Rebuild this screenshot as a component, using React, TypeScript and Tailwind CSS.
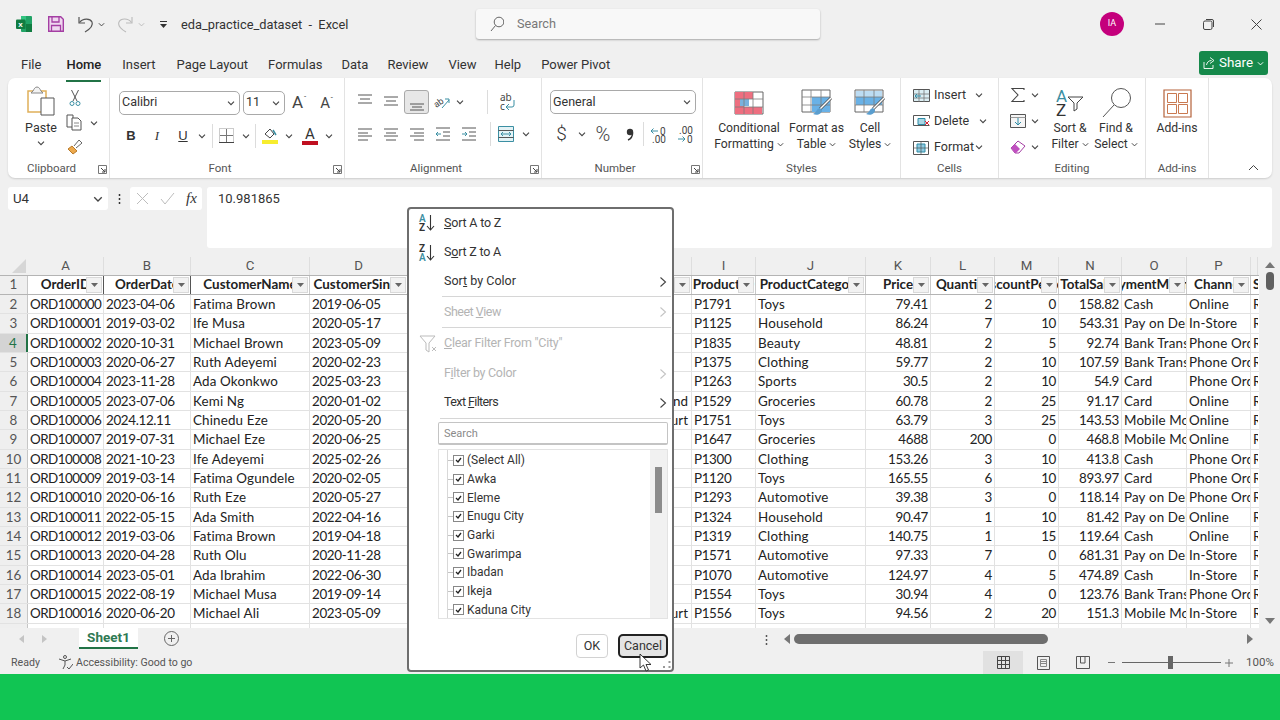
import React from "react";

const UI = "font-['Roboto','Noto_Sans',sans-serif]";
const CELL = "font-['Lato','Noto_Sans',sans-serif]";

const Chev = ({ c = "#444", w = 8 }: { c?: string; w?: number }) => (
  <svg width={w} height={w} viewBox="0 0 8 8" fill="none" className="flex-none"><path d="M1 2.6 4 5.6 7 2.6" stroke={c} strokeWidth="1.1" /></svg>
);
const Ic = ({ w = 18, h = 18, children, vb }: { w?: number; h?: number; vb?: string; children: React.ReactNode }) => (
  <svg width={w} height={h} viewBox={vb ?? `0 0 ${w} ${h}`} fill="none" className="flex-none">{children}</svg>
);
const Launcher = () => (
  <div className="absolute right-[2px] bottom-[4px]">
    <Ic w={9} h={9}><path d="M.5 8.5V.5h8v8z" stroke="#777" /><path d="M3 3l4 4M7 4v3H4" stroke="#444" /></Ic>
  </div>
);
const Group = ({ w, label, launcher, children, last }: { w: number; label: string; launcher?: boolean; children: React.ReactNode; last?: boolean }) => (
  <div style={{ width: w }} className={`relative flex-none flex flex-col h-full ${last ? "" : "border-r border-[#e3e3e3]"}`}>
    <div className="flex-1 min-h-0">{children}</div>
    <div className={`h-[20px] text-center text-[11.5px] leading-[20px] text-[#555] ${launcher ? "pr-[14px]" : ""}`}>{label}</div>
    {launcher && <Launcher />}
  </div>
);
const Lines = ({ ys, xs }: { ys: number[]; xs: [number, number][] }) => (
  <Ic w={16} h={16}>{ys.map((y, i) => <path key={i} d={`M${xs[i][0]} ${y}H${xs[i][1]}`} stroke="#555" />)}</Ic>
);
const Slot = ({ w, children, cls = "" }: { w: number; children?: React.ReactNode; cls?: string }) => (
  <div style={{ width: w }} className={`flex-none flex items-center justify-center ${cls}`}>{children}</div>
);
const Divider = () => <div className="w-px h-[24px] bg-[#dcdcdc] flex-none" />;
const Select = ({ w, text, gap }: { w: number; text: string; gap?: string }) => (
  <div style={{ width: w }} className={`h-[24px] flex-none flex items-center justify-between pl-[2px] pr-[4px] bg-white border border-[#a9a9a9] rounded-[5px] text-[12.5px] text-[#333] ${gap ?? ""}`}>
    <span>{text}</span><Chev />
  </div>
);
const BigBtn = ({ icon, a, b, w }: { icon: React.ReactNode; a: string; b?: string; w: number }) => (
  <div style={{ width: w }} className="flex-none flex flex-col items-center text-[12.2px] leading-[16px] text-[#333]">
    <div className="h-[30px] flex items-center">{icon}</div>
    <div className="mt-[2px] whitespace-nowrap">{a}</div>
    {b && <div className="flex items-center gap-[3px] whitespace-nowrap">{b}<Chev w={7} /></div>}
  </div>
);

const CondIcon = () => (
  <Ic w={30} h={24}>
    <path d="M1 1h28v22H1z" fill="#fff" stroke="#666" />
    <path d="M1 1h18v7h-9v8h18v7H1z" fill="#ee6f80" />
    <path d="M6 8h9v7H6z" fill="#79b2dd" />
    <path d="M10 1v22M19 1v22M1 8h28M1 16h28" stroke="#7c7c7c" strokeWidth=".8" />
  </Ic>
);
const TableIcon = ({ s = false }: { s?: boolean }) => (
  <Ic w={32} h={28}>
    <path d="M1 1h28v22H1z" fill="#fff" stroke="#666" />
    {s ? <path d="M2 2h26v6H2z" fill="#bcdcf3" /> : null}
    <path d={s ? "M2 8h26v8H2z" : "M11 8h18v15H11z"} fill="#69b1e6" />
    <path d="M1 8h28M1 16h28M10 1v22M20 1v22" stroke="#7c7c7c" strokeWidth=".8" />
    <path d="M30 9 19 20" stroke="#555" strokeWidth="3" /><path d="M30 9 19 20" stroke="#fff" strokeWidth="1.4" />
    <path d="M19 19c-3 0-3 4-7 6 4 2 9 0 9-4z" fill="#5a9ecf" />
  </Ic>
);

const headers: [string, number, string][] = [
  ["OrderID", 76, "A"], ["OrderDate", 87, "B"], ["CustomerName", 119, "C"], ["CustomerSince", 98, "D"],
  ["", 71, "E"], ["", 71, "F"], ["", 71, "G"], ["", 71, "H"],
  ["ProductID", 64, "I"], ["ProductCategory", 110, "J"], ["Price", 65, "K"], ["Quantity", 64, "L"],
  ["DiscountPercent", 64, "M"], ["TotalSales", 63, "N"], ["PaymentMethod", 65, "O"], ["Channel", 64, "P"], ["SalesRep", 7, ""],
];
const rows: string[][] = [
  ["ORD100000", "2023-04-06", "Fatima Brown", "2019-06-05", "", "P1791", "Toys", "79.41", "2", "0", "158.82", "Cash", "Online"],
  ["ORD100001", "2019-03-02", "Ife Musa", "2020-05-17", "", "P1125", "Household", "86.24", "7", "10", "543.31", "Pay on Delivery", "In-Store"],
  ["ORD100002", "2020-10-31", "Michael Brown", "2023-05-09", "", "P1835", "Beauty", "48.81", "2", "5", "92.74", "Bank Transfer", "Phone Order"],
  ["ORD100003", "2020-06-27", "Ruth Adeyemi", "2020-02-23", "", "P1375", "Clothing", "59.77", "2", "10", "107.59", "Bank Transfer", "Phone Order"],
  ["ORD100004", "2023-11-28", "Ada Okonkwo", "2025-03-23", "", "P1263", "Sports", "30.5", "2", "10", "54.9", "Card", "Phone Order"],
  ["ORD100005", "2023-07-06", "Kemi Ng", "2020-01-02", "Victoria Island", "P1529", "Groceries", "60.78", "2", "25", "91.17", "Card", "Online"],
  ["ORD100006", "2024.12.11", "Chinedu Eze", "2020-05-20", "Port Harcourt", "P1751", "Toys", "63.79", "3", "25", "143.53", "Mobile Money", "Online"],
  ["ORD100007", "2019-07-31", "Michael Eze", "2020-06-25", "", "P1647", "Groceries", "4688", "200", "0", "468.8", "Mobile Money", "Online"],
  ["ORD100008", "2021-10-23", "Ife Adeyemi", "2025-02-26", "", "P1300", "Clothing", "153.26", "3", "10", "413.8", "Cash", "Phone Order"],
  ["ORD100009", "2019-03-14", "Fatima Ogundele", "2020-02-05", "", "P1120", "Toys", "165.55", "6", "10", "893.97", "Card", "Phone Order"],
  ["ORD100010", "2020-06-16", "Ruth Eze", "2020-05-27", "", "P1293", "Automotive", "39.38", "3", "0", "118.14", "Pay on Delivery", "Phone Order"],
  ["ORD100011", "2022-05-15", "Ada Smith", "2022-04-16", "", "P1324", "Household", "90.47", "1", "10", "81.42", "Pay on Delivery", "Online"],
  ["ORD100012", "2019-03-06", "Fatima Brown", "2019-04-18", "", "P1319", "Clothing", "140.75", "1", "15", "119.64", "Cash", "Online"],
  ["ORD100013", "2020-04-28", "Ruth Olu", "2020-11-28", "", "P1571", "Automotive", "97.33", "7", "0", "681.31", "Pay on Delivery", "In-Store"],
  ["ORD100014", "2023-05-01", "Ada Ibrahim", "2022-06-30", "", "P1070", "Automotive", "124.97", "4", "5", "474.89", "Cash", "In-Store"],
  ["ORD100015", "2022-08-19", "Michael Musa", "2019-09-14", "", "P1554", "Toys", "30.94", "4", "0", "123.76", "Bank Transfer", "Phone Order"],
  ["ORD100016", "2020-06-20", "Michael Ali", "2023-05-09", "Port Harcourt", "P1556", "Toys", "94.56", "2", "20", "151.3", "Mobile Money", "In-Store"],
  ["ORD100017", "2021-02-11", "Michael Bello", "2021-07-19", "", "P1410", "Household", "", "", "", "", "", ""],
];

const widths = [76, 87, 119, 98];
const widths2 = [64, 110, 65, 64, 64, 63, 65, 64];
const numeric = [false, false, true, true, true, true, false, false];

const tightOf = (t?: string) => {
  if (!t) return "";
  if (t.startsWith("ORD")) return "tracking-[-0.5px]";
  if (/^P?[\d.-]+$/.test(t)) return "tracking-[-0.35px]";
  return "tracking-[0.15px]";
};

const Cell = ({ w, t, right }: { w: number; t?: string; right?: boolean }) => (
  <div style={{ width: w }} className={`flex-none h-full border-r border-[#e2e2e2] overflow-hidden whitespace-nowrap ${right ? "text-right pr-[2px]" : "pl-[2px]"} ${tightOf(t)}`}>{t}</div>
);

const Row = ({ n, r }: { n: number; r: string[] }) => (
  <div className={`flex h-[19.33px] leading-[18px] text-[13.4px] text-[#222] border-b border-[#e2e2e2] ${CELL}`}>
    <div className={`w-[28px] flex-none text-center border-r text-[#555] ${n === 4 ? "bg-[#d4d4d4] border-r-2 border-[#217346] text-[#217346]" : "bg-[#efefef] border-[#c6c6c6]"}`}>{n}</div>
    {widths.map((w, i) => <Cell key={i} w={w} t={r[i]} />)}
    <Cell w={213} />
    <div className="w-[71px] flex-none flex justify-end overflow-hidden pr-[3px] border-r border-[#e2e2e2]"><span className="flex-none whitespace-nowrap">{r[4]}</span></div>
    {widths2.map((w, i) => <Cell key={i} w={w} t={r[5 + i]} right={numeric[i]} />)}
    <div className="flex-none w-[7px] overflow-hidden pl-[2px]">{r[5] && r[7] ? "Retail" : ""}</div>
  </div>
);

const FilterBtn = () => (
  <div className="absolute right-[1px] top-[1px] bottom-[1px] w-[16px] bg-[#f2f2f2] border border-[#d9d9d9] flex items-center justify-center">
    <svg width="7" height="4" viewBox="0 0 7 4"><path d="M0 0h7L3.5 4z" fill="#666" /></svg>
  </div>
);

const SortIcon = ({ top, bot }: { top: string; bot: string }) => (
  <div className="relative w-[22px] h-[20px] flex-none flex items-center">
    <div className={`flex flex-col text-[10px] leading-[9px] font-semibold ${UI}`}>
      <span className={top === "A" ? "text-[#3b8fa3]" : "text-[#333]"}>{top}</span>
      <span className={bot === "A" ? "text-[#3b8fa3]" : "text-[#333]"}>{bot}</span>
    </div>
    <Ic w={9} h={18}><path d="M4.5 1v15M1 12l3.5 4L8 12" stroke="#333" strokeWidth="1.1" /></Ic>
  </div>
);

const MenuRow = ({ icon, children, arrow, dis, h = 29, pb = "", tr = "" }: { icon?: React.ReactNode; children: React.ReactNode; arrow?: boolean; dis?: boolean; h?: number; pb?: string; tr?: string }) => (
  <div style={{ height: h }} className={`flex items-center pl-[9px] pr-[5px] text-[12.5px] ${pb} ${dis ? "text-[#b4b4b4]" : "text-[#333]"}`}>
    <div className="w-[25px] flex-none">{icon}</div>
    <div className={`flex-1 whitespace-nowrap ${tr}`}>{children}</div>
    {arrow && <Ic w={8} h={12}><path d="M1.5 1.5 6.5 6l-5 4.5" stroke={dis ? "#c4c4c4" : "#444"} strokeWidth="1.1" /></Ic>}
  </div>
);
const cities = ["(Select All)", "Awka", "Eleme", "Enugu City", "Garki", "Gwarimpa", "Ibadan", "Ikeja", "Kaduna City"];

const FilterMenu = () => (
  <div className={`absolute left-[407px] top-[207px] w-[267px] h-[465px] bg-white border-2 border-[#6e6e6e] rounded-[4px] ${UI}`}>
    <div className="flex flex-col pl-[1px] pt-[1px]">
      <MenuRow icon={<SortIcon top="A" bot="Z" />} h={28} pb="pb-[2px]" tr="tracking-[-0.2px]"><u>S</u>ort A to Z</MenuRow>
      <MenuRow icon={<SortIcon top="Z" bot="A" />} tr="tracking-[-0.2px]">S<u>o</u>rt Z to A</MenuRow>
      <MenuRow arrow>Sor<u>t</u> by Color</MenuRow>
      <div className="ml-[32px] mr-[1px] h-px bg-[#d6d6d6]" />
      <MenuRow arrow dis h={30} tr="tracking-[-0.5px]">Sheet <u>V</u>iew</MenuRow>
      <div className="ml-[32px] mr-[1px] h-px bg-[#d6d6d6]" />
      <MenuRow dis h={31} tr="tracking-[-0.25px]" icon={<Ic w={18} h={18}><path d="M1 1h15l-6 7v9l-3-2V8z" stroke="#bbb" /><path d="M13 12l4 4M17 12l-4 4" stroke="#bbb" /></Ic>}><u>C</u>lear Filter From "City"</MenuRow>
      <MenuRow arrow dis tr="tracking-[-0.3px]">F<u>i</u>lter by Color</MenuRow>
      <MenuRow arrow tr="tracking-[-0.6px]">Text <u>F</u>ilters</MenuRow>
      <div className="ml-[30px] mr-[1px] h-px bg-[#d6d6d6] mt-[1px]" />
      <div className="ml-[28px] mt-[3px] w-[230px] h-[23px] border border-[#c4c4c4] border-b-2 rounded-[2px] pl-[5px] text-[11px] leading-[21px] text-[#8a8a8a]">Search</div>
      <div className="ml-[28px] mt-[4px] w-[230px] h-[170px] border border-[#e3e3e3] flex overflow-hidden">
        <div className="flex-1 pl-[8px]">
          <div className="pt-[1px] border-l border-[#d8d8d8]">
            {cities.map((c) => (
              <div key={c} className="flex items-center h-[18.7px] text-[12px] text-[#333]">
                <div className="w-[5px] h-px bg-[#c4c4c4]" />
                <div className="w-[11px] h-[11px] border border-[#888] flex items-center justify-center flex-none">
                  <svg width="7" height="6" viewBox="0 0 7 6"><path d="M1 3l2 2 3-4" stroke="#222" strokeWidth="1.3" fill="none" /></svg>
                </div>
                <span className="ml-[3px]">{c}</span>
              </div>
            ))}
          </div>
        </div>
        <div className="w-[17px] bg-[#f1f1f1] pt-[17px] flex justify-center">
          <div className="w-[7px] h-[46px] bg-[#8c8c8c]" />
        </div>
      </div>
      <div className="flex justify-end gap-[10px] mt-[15px] pr-[4px] text-[12.5px] text-[#333]">
        <div className="w-[32px] h-[24px] border border-[#d2d2d2] rounded-[4px] flex items-center justify-center">OK</div>
        <div className="w-[50px] h-[24px] border-2 border-[#222] bg-[#e4e4e4] rounded-[5px] flex items-center justify-center">Cancel</div>
      </div>
    </div>
    <div className="absolute left-[230px] top-[444px]">
      <svg width="13" height="19" viewBox="0 0 13 19"><path d="M1 1v14l3.5-3 2.5 6 2.5-1-2.5-5.5H12z" fill="#fff" stroke="#222" strokeWidth=".9" /></svg>
    </div>
    <div className="absolute right-[1px] bottom-[1px]">
      <svg width="8" height="8" viewBox="0 0 8 8" fill="#999"><rect x="5.5" y="0" width="2" height="2" /><rect x="5.5" y="5" width="2" height="2" /><rect x="0" y="5" width="2" height="2" /></svg>
    </div>
  </div>
);

export default function App() {
  return (
    <div className={`relative w-[1280px] h-[720px] overflow-hidden bg-[#f0f0f0] flex flex-col ${UI}`}>
      {/* title bar */}
      <div className="h-[48px] flex-none flex items-center text-[#333] text-[12.5px]">
        <div className="ml-[16px] w-[16px] h-[16px] flex-none">
          <svg width="16" height="16" viewBox="0 0 16 16"><rect x="5" y="0" width="11" height="16" rx="1" fill="#21a366" /><rect x="10" y="8" width="6" height="8" fill="#107c41" /><rect x="5" y="0" width="5" height="5" fill="#33c481" /><rect x="0" y="3.5" width="9.5" height="9.5" rx="1" fill="#107c41" /><text x="2.2" y="11" fontSize="8" fontWeight="700" fill="#fff" fontFamily="Liberation Sans">x</text></svg>
        </div>
        <div className="ml-[16px] flex-none">
          <Ic w={16} h={16}><path d="M.7.7h12l2.6 2.6v12H.7z" fill="#efd7ef" stroke="#a43ea3" strokeWidth="1.4" /><path d="M4 1v5h7V1M3.5 15.3V9.5h9v5.8" stroke="#a43ea3" strokeWidth="1.3" /></Ic>
        </div>
        <div className="ml-[13px] flex-none">
          <Ic w={18} h={18}><path d="M2 2v6h6" stroke="#555" strokeWidth="1.2" /><path d="M2.5 7.5C6 3 13 3 15 7c1.700 4-2 7-7 10" stroke="#555" strokeWidth="1.2" /></Ic>
        </div>
        <div className="ml-[3px]"><Chev w={7} /></div>
        <div className="ml-[12px]">
          <Ic w={17} h={18}><path d="M15 2v6H9" stroke="#bbb" strokeWidth="1.100" /><path d="M14.500 7.500C11 3 4 3 2 7c-1.700 4 2 7 7 10" stroke="#bbb" strokeWidth="1.100" /></Ic>
        </div>
        <div className="ml-[4px]"><Chev w={7} c="#bbb" /></div>
        <div className="ml-[14px]"><Ic w={9} h={9}><path d="M1 1.500h7" stroke="#333" /><path d="M1 4l3.500 4L8 4z" fill="#333" /></Ic></div>
        <div className="ml-[13px] w-[200px] whitespace-pre text-[12.8px] pt-[1px]">eda_practice_dataset  -  Excel</div>
        <div className="ml-[95px] w-[344px] h-[30px] -mt-[1px] flex items-center bg-[#f8f8f8] rounded-[3px] shadow-[0_1px_2px_rgba(0,0,0,0.3)] pl-[14px] text-[12.7px] text-[#777]">
          <Ic w={14} h={16}><circle cx="9" cy="6" r="4.800" stroke="#666" /><path d="M5.500 9.500 1 15" stroke="#666" /></Ic>
          <span className="ml-[13px] pt-[1px]">Search</span>
        </div>
        <div className="ml-[280px] w-[24px] h-[24px] rounded-full bg-[#c4007c] text-white text-[9px] flex items-center justify-center flex-none">IA</div>
        <div className="ml-[31px] flex-none"><Ic w={10} h={2}><path d="M0 1h10" stroke="#444" /></Ic></div>
        <div className="ml-[38px] flex-none"><Ic w={11} h={11}><rect x=".5" y="2" width="8.500" height="8.500" rx="1.500" stroke="#444" /><path d="M3 .5h6a1.500 1.500 0 0 1 1.500 1.500v6" stroke="#444" /></Ic></div>
        <div className="ml-[37px] flex-none"><Ic w={11} h={11}><path d="M.5.500l10 10M10.500.500l-10 10" stroke="#444" /></Ic></div>
      </div>
      {/* tabs */}
      <div className="h-[30px] flex-none flex items-start text-[13px] text-[#333] pl-[21px] pr-[12px] gap-[20px] relative">
        <span className="leading-[33px] mr-[5px]">File</span>
        <span className="leading-[33px] mr-[1px] font-medium relative text-[#222]">Home<span className="absolute left-0 right-0 bottom-[-1px] h-[2px] bg-[#217346]" /></span>
        <span className="leading-[33px] mr-[1px]">Insert</span>
        <span className="leading-[33px]">Page Layout</span>
        <span className="leading-[33px] -mr-[1px]">Formulas</span>
        <span className="leading-[33px] -mr-[1px]">Data</span>
        <span className="leading-[33px]">Review</span>
        <span className="leading-[33px] -mr-[2px]">View</span>
        <span className="leading-[33px]">Help</span>
        <span className="leading-[33px]">Power Pivot</span>
        <div className="ml-auto mt-[3px] w-[69px] h-[24px] rounded-[3px] bg-[#16894b] text-white flex items-center justify-center gap-[4px]">
          <Ic w={12} h={12}><path d="M1 5v6.500h9V8M3.500 8C4 5 6 3.500 8.500 3.500M7 .5l4 3-4 3" stroke="#fff" strokeWidth=".9" /></Ic>
          <span className="text-[13.4px] pt-[1px]">Share</span><Chev c="#fff" w={7} />
        </div>
      </div>
      {/* ribbon */}
      <div className="mx-[8px] h-[100px] flex-none bg-white rounded-[7px] shadow-[0_1px_2px_rgba(0,0,0,0.15)] flex text-[#333]">
        <Group w={102} label="Clipboard" launcher>
          <div className="flex h-full pt-[8px] pl-[18px]">
            <div className="w-[30px] flex flex-col items-center flex-none">
              <Ic w={30} h={30}><path d="M2 5h18v21H2z" fill="#fff" stroke="#e0b05a" strokeWidth="1.500" /><path d="M7 5c1-2 2-4 4-4s3 2 4 4l2 2H5z" fill="#f3f3f3" stroke="#888" /><path d="M15 12h13v17H15z" fill="#fff" stroke="#555" /></Ic>
              <span className="text-[12.5px] mt-[3px] leading-[18px]">Paste</span>
              <div className="mt-[2px]"><Chev /></div>
            </div>
            <div className="ml-[10px] flex flex-col flex-none">
              <div className="flex h-[26px] items-center pl-[3px]"><Ic w={12} h={18}><path d="M2.500 1 8 12M9.500 1 4 12" stroke="#555" /><circle cx="3" cy="14.500" r="2" stroke="#3b8fa3" /><circle cx="9" cy="14.500" r="2" stroke="#3b8fa3" /></Ic></div>
              <div className="flex h-[26px] items-center"><Ic w={17} h={17}><path d="M1 1h6v12H1z" stroke="#555" /><path d="M6 4h6l3 3v9H6z" fill="#fff" stroke="#555" /><path d="M8 9h5M8 12h5" stroke="#888" /></Ic><div className="ml-[7px]"><Chev /></div></div>
              <div className="flex h-[24px] items-center"><Ic w={17} h={16}><path d="M6 7l5 5-4 3-5-5z" fill="#eda94c" stroke="#b97a2a" /><path d="M8 7l5-6 3 3-6 5" stroke="#666" /></Ic></div>
            </div>
          </div>
        </Group>
        <Group w={235} label="Font" launcher>
          <div className="pt-[12px] pl-[9px]">
            <div className="flex items-center">
              <Select w={121} text="Calibri" />
              <Select w={42} text="11" gap="ml-[3px]" />
              <Slot w={27} cls="ml-[1px]"><span className="text-[17px] text-[#444]">A<sup className="text-[8px] top-[-6px]">ˆ</sup></span></Slot>
              <Slot w={28}><span className="text-[15px] text-[#444]">A<sup className="text-[8px] top-[-5px]">ˇ</sup></span></Slot>
            </div>
            <div className="flex items-center mt-[10px] h-[20px]">
              <Slot w={6} />
              <Slot w={12}><span className="font-bold text-[13px] font-['Liberation_Sans']">B</span></Slot>
              <Slot w={14} />
              <Slot w={12}><span className="italic text-[13px] font-['Liberation_Serif']">I</span></Slot>
              <Slot w={14} />
              <Slot w={12}><span className="underline text-[13px] font-['Liberation_Sans']">U</span></Slot>
              <Slot w={9} /><Chev />
              <Slot w={6} /><Divider /><Slot w={6} />
              <Ic w={15} h={15}><path d="M.5.500h14v14H.5z" stroke="#999" strokeDasharray="1 1" /><path d="M7.500 1v13M1 7.500h13" stroke="#777" /><path d="M0 14.500h15" stroke="#444" /></Ic>
              <Slot w={8} /><Chev />
              <Slot w={5} /><Divider /><Slot w={6} />
              <Ic w={16} h={17}><path d="M3 7l5-5 4 5-4 4z" stroke="#444" /><path d="M11 3l3 5" stroke="#3b8fa3" strokeWidth="1.500" /><path d="M0 13h16v4H0z" fill="#f7ed2e" /></Ic>
              <Slot w={7} /><Chev />
              <Slot w={9} />
              <div className="relative w-[16px] h-[18px] flex-none flex justify-center"><span className="text-[15px] leading-[14px] text-[#333]">A</span><div className="absolute left-0 right-0 bottom-0 h-[4px] bg-[#c00f20]" /></div>
              <Slot w={7} /><Chev />
            </div>
          </div>
        </Group>
        <Group w={197} label="Alignment" launcher>
          <div className="pt-[12px] pl-[7px]">
            <div className="flex items-center h-[24px]">
              <Slot w={26} cls="-mt-[4px]"><Lines ys={[3, 7, 11]} xs={[[1, 15], [3, 13], [1, 15]]} /></Slot>
              <Slot w={26}><Lines ys={[3, 7, 11]} xs={[[1, 15], [3, 13], [1, 15]]} /></Slot>
              <Slot w={25} cls="h-[24px] bg-[#e7e7e7] border border-[#a9a9a9] rounded-[3px] pt-[5px]"><Lines ys={[7, 10, 13]} xs={[[1, 15], [3, 13], [1, 15]]} /></Slot>
              <Slot w={27}><Ic w={17} h={15}><text x="0" y="10" fontSize="9" fill="#444" transform="rotate(-35 6 8)">ab</text><path d="M8 13 15 5M11 4h4v4" stroke="#3b8fa3" /></Ic></Slot>
              <Chev />
              <Slot w={23} /><Divider /><Slot w={11} />
              <Ic w={18} h={20}><text x="1" y="9" fontSize="10" fill="#444" fontFamily="Noto Sans">ab</text><text x="1" y="18" fontSize="10" fill="#444" fontFamily="Noto Sans">c</text><path d="M15 8v5a2 2 0 0 1-2 2H8M10 12l-3 3 3 3" stroke="#3b8fa3" /></Ic>
            </div>
            <div className="flex items-center h-[20px] mt-[10px]">
              <Slot w={26}><Lines ys={[3, 7, 10, 14]} xs={[[1, 15], [1, 11], [1, 15], [1, 11]]} /></Slot>
              <Slot w={26}><Lines ys={[3, 7, 10, 14]} xs={[[1, 15], [3, 13], [1, 15], [3, 13]]} /></Slot>
              <Slot w={26}><Lines ys={[3, 7, 10, 14]} xs={[[1, 15], [5, 15], [1, 15], [5, 15]]} /></Slot>
              <Slot w={26}><Ic w={16} h={16}><path d="M1 2h14M8 6h7M8 10h7M1 14h14" stroke="#555" /><path d="M6 8H1M3 6 1 8l2 2" stroke="#3b8fa3" /></Ic></Slot>
              <Slot w={26}><Ic w={16} h={16}><path d="M1 2h14M8 6h7M8 10h7M1 14h14" stroke="#555" /><path d="M1 8h5M4 6l2 2-2 2" stroke="#3b8fa3" /></Ic></Slot>
              <Slot w={8} /><Divider /><Slot w={7} />
              <Ic w={16} h={16}><path d="M.5.500h15v15H.5z" fill="#e4f2f5" stroke="#3b8fa3" /><path d="M.5 4.500h15M.5 11.500h15" stroke="#555" /><path d="M3 8h10M5 6 3 8l2 2M11 6l2 2-2 2" stroke="#3b8fa3" /></Ic>
              <Slot w={8} /><Chev />
            </div>
          </div>
        </Group>
        <Group w={161} label="Number" launcher>
          <div className="pt-[12px] pl-[8px]">
            <Select w={146} text="General" />
            <div className="flex items-center mt-[9px] h-[22px]">
              <Slot w={23}><span className="text-[19px] font-light text-[#333]">$</span></Slot>
              <Slot w={5} /><Chev />
              <Slot w={5} />
              <Slot w={24}><span className="text-[20px] font-light text-[#444]">%</span></Slot>
              <Slot w={9} />
              <Slot w={12}><Ic w={8} h={13}><circle cx="4" cy="4" r="3.200" fill="#333" /><path d="M6.600 4.500c0 3.500-2 6.500-4.600 7.500" stroke="#333" strokeWidth="1.500" /></Ic></Slot>
              <Slot w={7} /><Divider />
              <Slot w={6} />
              <Ic w={17} h={17}><path d="M1 5h7M3.500 2.500 1 5l2.500 2.500" stroke="#3b8fa3" /><text x="10" y="8.500" fontSize="10" fill="#444">0</text><text x="2" y="16.500" fontSize="10" fill="#444">.00</text></Ic>
              <Slot w={10} />
              <Ic w={17} h={17}><text x="2" y="8" fontSize="10" fill="#444">.00</text><path d="M1 13h7M5.500 10.500 8 13l-2.500 2.500" stroke="#3b8fa3" /><text x="10" y="16.500" fontSize="10" fill="#444">0</text></Ic>
            </div>
          </div>
        </Group>
        <Group w={198} label="Styles">
          <div className="flex pt-[10px] pl-[9px]">
            <BigBtn w={74} icon={<CondIcon />} a="Conditional" b="Formatting" />
            <BigBtn w={61} icon={<TableIcon />} a="Format as" b="Table" />
            <BigBtn w={46} icon={<TableIcon s />} a="Cell" b="Styles" />
          </div>
        </Group>
        <Group w={98} label="Cells">
          <div className="pt-[4px] pl-[12px] text-[12.5px]">
            <div className="flex items-center h-[26px]"><Ic w={17} h={16}><path d="M.5 2.500h16v12H.5z" fill="#dbeef3" stroke="#555" /><path d="M.5 7h16M.5 11h16M6 3v12M11 3v12" stroke="#777" strokeWidth=".8" /><path d="M8 9H2M4 7 2 9l2 2" stroke="#2e8ca6" /></Ic><span className="ml-[4px] w-[41px]">Insert</span><Chev /></div>
            <div className="flex items-center h-[26px]"><Ic w={17} h={16}><path d="M.5 2.500h16v3M.5 2.500v10h16" stroke="#555" /><path d="M5 5.500h7v6H5z" fill="#aad6e5" stroke="#2e8ca6" /><path d="M12 8l4 4M16 8l-4 4" stroke="#d23" /></Ic><span className="ml-[4px] w-[45px]">Delete</span><Chev /></div>
            <div className="flex items-center h-[26px]"><Ic w={17} h={16}><path d="M.5 2.500h15v13H.5z" stroke="#555" /><path d="M4 5h8v8H4z" fill="#8fcbe2" stroke="#2e8ca6" /><path d="M.5 9h15M8 2v14" stroke="#555" strokeWidth=".7" /></Ic><span className="ml-[4px] w-[41px]">Format</span><Chev /></div>
          </div>
        </Group>
        <Group w={147} label="Editing">
          <div className="flex pt-[4px] pl-[11px]">
            <div className="w-[38px] flex-none">
              <div className="flex items-center h-[26px]"><Ic w={16} h={16}><path d="M14 3V1.500H2L8 8l-6 6.500h12V13" stroke="#444" strokeWidth="1.100" /></Ic><span className="ml-[5px]"><Chev /></span></div>
              <div className="flex items-center h-[26px]"><Ic w={16} h={16}><path d="M.5 1.500h15v13H.5z" fill="#f5f5f5" stroke="#555" /><path d="M.5 4.500h15" stroke="#999" /><path d="M8 5v7M5 9l3 3 3-3" stroke="#2e8ca6" /></Ic><span className="ml-[5px]"><Chev /></span></div>
              <div className="flex items-center h-[26px]"><Ic w={16} h={16}><path d="M1 9l7-7 7 5-6 7H5z" fill="#fff" stroke="#a43ea3" /><path d="M1 9l4-4 5 5-4 4H5z" fill="#c04fc0" /></Ic><span className="ml-[5px]"><Chev /></span></div>
            </div>
            <div className="-ml-[1px] pt-[6px]">
              <BigBtn w={46} icon={<div className="flex items-center"><div className={`flex flex-col text-[17px] leading-[14px] ${UI}`}><span className="text-[#3b8fa3]">A</span><span>Z</span></div><Ic w={17} h={18}><path d="M1 3h15l-6 6v6l-3 2V9z" stroke="#444" /></Ic></div>} a="Sort &" b="Filter" />
            </div>
            <div className="pl-[0px] pt-[6px]">
              <BigBtn w={46} icon={<Ic w={30} h={30}><circle cx="20" cy="10" r="9.500" stroke="#555" /><path d="M13 17 2 29" stroke="#555" /></Ic>} a="Find &" b="Select" />
            </div>
          </div>
        </Group>
        <Group w={63} label="Add-ins">
          <div className="pt-[10px] flex justify-center">
            <BigBtn w={60} icon={<Ic w={29} h={29}><path d="M1 1h27v27H1z" stroke="#b5623a" strokeWidth="1.200" /><path d="M4.500 4.500h9v9h-9zM15.500 4.500h9v9h-9zM4.500 15.500h9v9h-9zM15.500 15.500h9v9h-9z" stroke="#c97950" /></Ic>} a="Add-ins" />
          </div>
        </Group>
        <div className="flex-1 flex items-end justify-end pr-[13px] pb-[7px]">
          <Ic w={11} h={7}><path d="M1 6l4.500-4.500L10 6" stroke="#444" /></Ic>
        </div>
      </div>
      {/* formula bar */}
      <div className="mt-[9px] mx-[8px] h-[61px] flex-none flex items-start text-[#333]">
        <div className="w-[100px] h-[23px] bg-white rounded-[3px] flex items-center justify-between pl-[5px] pr-[5px] text-[13.3px] flex-none"><span>U4</span><Chev w={10} /></div>
        <div className="w-[22px] h-[23px] flex items-center justify-center flex-none"><Ic w={3} h={12}><path d="M1.500 1v2M1.500 5v2M1.500 9v2" stroke="#333" strokeWidth="1.500" /></Ic></div>
        <div className="w-[72px] h-[23px] bg-white rounded-[3px] flex items-center pl-[6px] gap-[11px] flex-none">
          <Ic w={13} h={13}><path d="M1 1l11 11M12 1 1 12" stroke="#bdbdbd" /></Ic>
          <Ic w={15} h={13}><path d="M1 7l4 5L14 1" stroke="#bdbdbd" /></Ic>
          <span className="italic text-[15px] font-['Liberation_Serif'] text-[#333]">fx</span>
        </div>
        <div className="ml-[5px] flex-1 h-[61px] bg-white rounded-[3px] pl-[11px] pt-[1px] text-[13px] leading-[21px]">10.981865</div>
      </div>
      {/* sheet */}
      <div className="mt-[9px] h-[371px] flex-none flex overflow-hidden">
        <div className="w-[1259px] flex-none overflow-hidden">
          <div className="flex h-[18px] text-[13.3px] leading-[18px] text-[#555] bg-[#f0f0f0]">
            <div className="w-[28px] flex-none flex justify-end items-end pr-[2px] pb-[2px]">
              <svg width="14" height="14" viewBox="0 0 14 14"><path d="M14 0v14H0z" fill="#d6d6d6" /></svg>
            </div>
            {headers.map(([, w, l], i) => (
              <div key={i} style={{ width: w }} className="flex-none text-center border-r border-[#dedede]">{l}</div>
            ))}
          </div>
          <div className={`flex h-[20px] leading-[17px] text-[13.4px] bg-white border-y border-[#b4b4b4] font-bold text-[#222] ${CELL}`}>
            <div className="w-[28px] flex-none text-center font-normal text-[#555] bg-[#efefef] border-r border-[#c6c6c6]">1</div>
            {headers.map(([t, w], i) => (
              <div key={i} style={{ width: w }} className={`relative flex-none flex overflow-hidden ${w === 7 ? "justify-start pl-[2px]" : "justify-center border-r"} ${i < 2 ? "border-[#555]" : "border-[#c9c9c9]"}`}>
                <span className="flex-none whitespace-nowrap">{t}</span>
                {w > 8 && (i < 4 || i >= 7) && <FilterBtn />}
              </div>
            ))}
          </div>
          <div className="bg-white">
            {rows.map((r, i) => <Row key={i} n={i + 2} r={r} />)}
          </div>
        </div>
        <div className="w-[21px] flex-none flex flex-col items-center justify-between pt-[5px] pb-[4px]">
          <div className="flex flex-col items-center gap-[4px]">
            <svg width="10" height="6" viewBox="0 0 10 6"><path d="M5 0l5 6H0z" fill="#777" /></svg>
            <div className="w-[8px] h-[18px] rounded-[4px] bg-[#606060]" />
          </div>
          <svg width="10" height="6" viewBox="0 0 10 6"><path d="M0 0h10L5 6z" fill="#777" /></svg>
        </div>
      </div>
      {/* sheet tabs */}
      <div className="h-[23px] flex-none flex items-start bg-[#f0f0f0] text-[#555]">
        <div className="ml-[19px] mt-[7px]"><svg width="5" height="8" viewBox="0 0 5 8"><path d="M5 0v8L0 4z" fill="#c4c4c4" /></svg></div>
        <div className="ml-[18px] mt-[7px]"><svg width="5" height="8" viewBox="0 0 5 8"><path d="M0 0v8l5-4z" fill="#c4c4c4" /></svg></div>
        <div className="ml-[32px] w-[59px] h-[21px] bg-white border-b-2 border-[#217346] text-center text-[13.5px] leading-[19px] font-bold text-[#2f7a54] flex-none">Sheet1</div>
        <div className="ml-[26px] mt-[3px]"><Ic w={15} h={15}><circle cx="7.500" cy="7.500" r="7" stroke="#666" /><path d="M4 7.500h7M7.500 4v7" stroke="#666" /></Ic></div>
        <div className="ml-[586px] mt-[6px]"><Ic w={3} h={12}><path d="M1.500 1v2M1.500 5v2M1.500 9v2" stroke="#555" strokeWidth="1.500" /></Ic></div>
        <div className="ml-[16px] mt-[6px]"><svg width="6" height="10" viewBox="0 0 6 10"><path d="M6 0v10L0 5z" fill="#777" /></svg></div>
        <div className="ml-[4px] mt-[6px] w-[254px] h-[10px] rounded-[5px] bg-[#6e6e6e]" />
        <div className="ml-[199px] mt-[6px]"><svg width="6" height="10" viewBox="0 0 6 10"><path d="M0 0v10l6-5z" fill="#777" /></svg></div>
      </div>
      {/* status */}
      <div className="h-[23px] flex-none flex items-center text-[10.6px] text-[#555]">
        <span className="ml-[11px] w-[47px]">Ready</span>
        <Ic w={15} h={15}><circle cx="7" cy="2" r="1.500" stroke="#555" /><path d="M1 4l6 2 6-2M7 6v4l-2 4M9 12l2 2 4-5" stroke="#555" /></Ic>
        <span className="ml-[3px]">Accessibility: Good to go</span>
        <div className="ml-auto flex items-center h-full">
          <div className="w-[40px] h-full bg-[#e1e1e1] flex items-center justify-center"><Ic w={13} h={13}><path d="M.5.500h12v12H.5zM.5 4.500h12M.5 8.500h12M4.500.500v12M8.500.500v12" stroke="#444" /></Ic></div>
          <div className="w-[40px] flex justify-center"><Ic w={13} h={14}><path d="M.5.500h12v13H.5z" stroke="#555" /><path d="M3.500 3.500h6v7h-6zM3.500 5.500h6M3.500 7.500h6" stroke="#888" /></Ic></div>
          <div className="w-[40px] flex justify-center"><Ic w={14} h={13}><path d="M.5.500h13v12H.5zM9 .500v6.500H4.500V.500" stroke="#555" /></Ic></div>
          <span className="ml-[5px]"><Ic w={7} h={3}><path d="M0 1.500h7" stroke="#777" /></Ic></span>
          <div className="ml-[7px] relative w-[99px] h-px bg-[#666]"><div className="absolute left-[46px] -top-[6px] w-[5px] h-[13px] bg-[#666]" /></div>
          <span className="ml-[4px] mr-[13px]"><Ic w={8} h={8}><path d="M0 4h8M4 0v8" stroke="#777" /></Ic></span>
          <span className="mr-[7px] w-[27px] text-[11.5px] whitespace-nowrap">100%</span>
        </div>
      </div>
      <div className="flex-1 bg-[#11c553]" />
      <FilterMenu />
    </div>
  );
}
